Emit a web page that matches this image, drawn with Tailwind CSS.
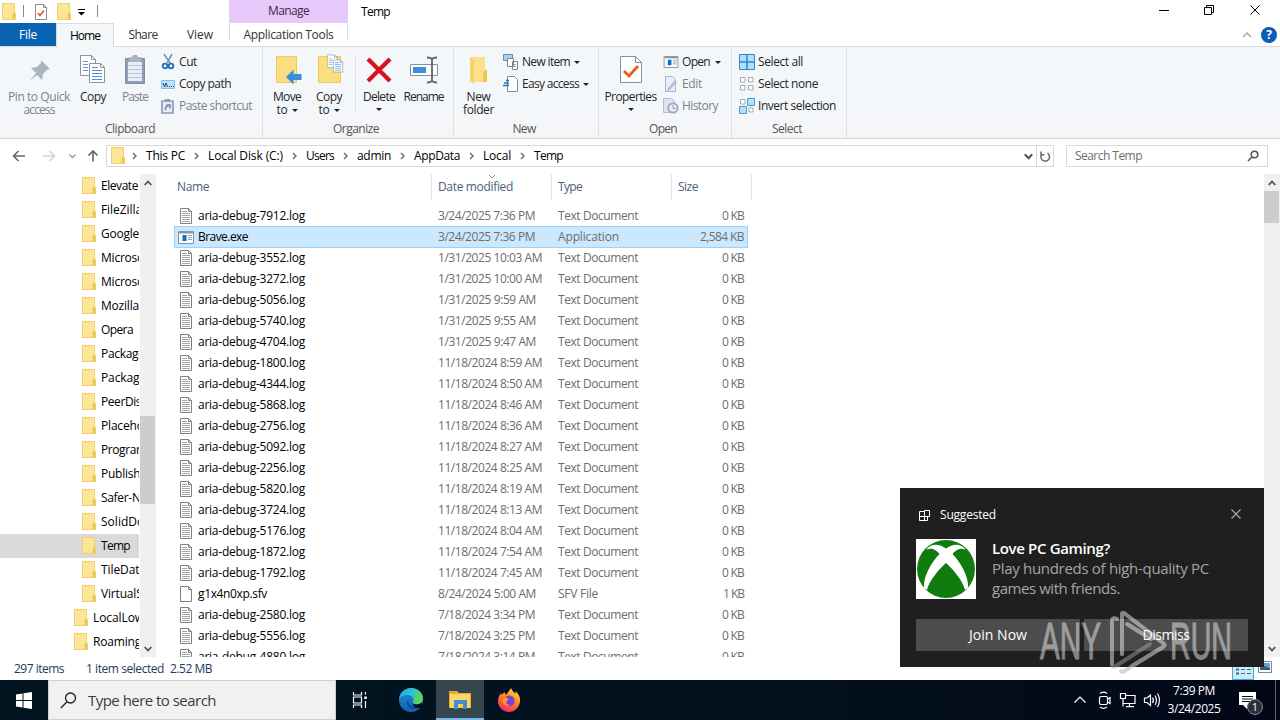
<!DOCTYPE html>
<html lang="en">
<head>
<meta charset="utf-8">
<title>Temp</title>
<script src="https://cdn.jsdelivr.net/npm/@tailwindcss/browser@4"></script>
</head>
<body class="w-[1280px] h-[720px] overflow-hidden bg-white font-['Open_Sans',sans-serif] text-[12px] leading-[12px] text-black whitespace-nowrap">
<svg class="hidden">
  <symbol id="folder" viewBox="0 0 14 17"><path d="M.5.5h12v9l1 .8v6.2H.5z" fill="#fce596" stroke="#efcf6c"/><path d="M10.500 16v-5l2.500-1.500v7z" fill="#f0c94f"/></symbol>
  <symbol id="doc" viewBox="0 0 12 16"><path d="M.5.5h8l3 3v12H.5z" fill="#fff" stroke="#808080"/><path d="M8.500.5v3h3" fill="none" stroke="#808080"/><path d="M2 3.500h5M2 5.500h8M2 7.500h8M2 9.500h8M2 11.500h8M2 13.500h8" stroke="#a5a5a5"/></symbol>
  <symbol id="blank" viewBox="0 0 12 16"><path d="M.5.5h8l3 3v12H.5z" fill="#fff" stroke="#808080"/><path d="M8.500.5v3h3" fill="none" stroke="#808080"/></symbol>
  <symbol id="app" viewBox="0 0 16 13"><path d="M.5.5h15v12H.5z" fill="#fff" stroke="#84909c"/><path d="M1 1.500h14" stroke="#8a959f" stroke-width="2"/><path d="M4.500 4h4v6h-4z" fill="#0a72c8"/><path d="M10 4.500h4M10 6.500h4M10 8.500h4" stroke="#8fa5b8"/></symbol>
  <symbol id="pages" viewBox="0 0 26 30"><path d="M.5 1.500h11l4 4v16H.5z" fill="#fff" stroke="#8b95a0"/><path d="M11.500 1.500v4h4" fill="none" stroke="#8b95a0"/><path d="M3 7.500h5M3 10.500h5M3 13.500h5M3 16.500h5" stroke="#5b9bd8"/><path d="M9.500 9.500h11l4 4v15h-15z" fill="#fff" stroke="#8b95a0"/><path d="M20.500 9.500v4h4" fill="none" stroke="#8b95a0"/><path d="M12 13.500h6M12 16.500h10M12 19.500h10M12 22.500h10M12 25.500h10" stroke="#4a90d9"/></symbol>
  <symbol id="up" viewBox="0 0 8 6"><path d="M.7 5L4 1.500 7.300 5" fill="none" stroke="#505050" stroke-width="1.800"/></symbol>
  <symbol id="down" viewBox="0 0 8 6"><path d="M.7 1L4 4.500 7.300 1" fill="none" stroke="#505050" stroke-width="1.800"/></symbol>
  <symbol id="caret" viewBox="0 0 6 3"><path d="M0 0h6L3 3z" fill="#222"/></symbol>
  <symbol id="chev" viewBox="0 0 5 8"><path d="M1 1l3 3-3 3" fill="none" stroke="#666" stroke-width="1.400"/></symbol>
</svg>

<!-- title bar -->
<div class="flex h-[23px] pl-[2px]">
  <div class="flex w-[227px] gap-0 items-center">
    <svg class="w-[14px] h-[17px] -mt-px"><use href="#folder"/></svg>
    <div class="w-px h-[12px] bg-[#8a8a8a] ml-[7px] -mt-[2px]"></div>
    <svg class="w-[12px] h-[16px] ml-[11px]" viewBox="0 0 12 16"><path d="M.5.5h8l3 3v12H.5z" fill="#fff" stroke="#8b8b8b"/><path d="M8.500.5v3h3" fill="none" stroke="#8b8b8b"/><path d="M3 9l2 2.500L9 6.500" fill="none" stroke="#e2572b" stroke-width="1.600"/></svg>
    <svg class="w-[14px] h-[17px] ml-[10px]"><use href="#folder"/></svg>
    <svg class="w-[7px] h-[7px] ml-[7px] mt-[2px]" viewBox="0 0 7 7"><path d="M0 .5h7" stroke="#000"/><path d="M0 3h7L3.500 6.500z"/></svg>
    <div class="w-px h-[12px] bg-[#8a8a8a] ml-[12px] -mt-[2px]"></div>
  </div>
  <div class="flex w-[119px] bg-[#e8c9fc] items-center justify-center pb-[2px] text-[#3c2b49]"><span data-w="41">Manage</span></div>
  <div class="flex flex-1 items-center pl-[13px]"><span data-w="29">Temp</span></div>
  <svg class="w-[140px] h-[23px] mt-px" viewBox="0 0 140 23" fill="none" stroke="#000"><path d="M19 9.500h10"/><path d="M64.500 6.500h7v7h-7zM66.500 6V4.500h7v7H72"/><path d="M110.500 4.500l9 9M119.500 4.500l-9 9"/></svg>
</div>
<!-- ribbon tabs -->
<div class="flex h-[24px] border-b border-[#dadbdc]">
  <div class="flex w-[56px] h-[23px] bg-[#0a63b1] text-white items-center justify-center"><span data-w="18">File</span></div>
  <div class="flex w-[58px] h-[24px] bg-[#f4f7fa] border-x border-t border-[#dadbdc] items-center justify-center"><span data-w="30">Home</span></div>
  <div class="flex w-[58px] items-center justify-center text-[#333]"><span data-w="29">Share</span></div>
  <div class="flex w-[57px] items-center justify-center text-[#333] pr-px"><span data-w="26">View</span></div>
  <div class="flex w-[119px] h-[17px] pt-[6px] border-x border-[#dadbdc] justify-center text-[#333]"><span data-w="90">Application Tools</span></div>
  <div class="flex flex-1 justify-end items-center gap-[9px] pr-[3px]">
    <svg class="w-[10px] h-[6px]" viewBox="0 0 10 6"><path d="M1 5l4-4 4 4" fill="none" stroke="#a4a4a4" stroke-width="1.300"/></svg>
    <div class="flex w-[16px] h-[16px] rounded-full bg-[#0a5fb4] text-white font-bold items-center justify-center">?</div>
  </div>
</div>
<!-- ribbon -->
<div class="flex h-[92px] bg-linear-to-b from-[#f4f7fa] from-70% to-[#f5f5f6] border-b border-[#d6d7d8] text-[#262626]">
  <section class="flex flex-col w-[263px] border-r border-[#e0e1e3]">
    <div class="flex h-[75px] pt-[4px]">
      <div class="flex flex-col items-center w-[78px] pt-[3px] text-[#808285]">
        <svg class="w-[32px] h-[32px] mb-[5px]" viewBox="0 0 32 32"><path d="M18 6l9 9-3 1-4 4-1 6-5-5-7 6 6-8-5-5 6-1 4-4z" fill="#a9b4c2"/></svg>
        <span data-w="62">Pin to Quick</span><span data-w="31" class="mt-px">access</span></div>
      <div class="flex flex-col items-center w-[30px] pt-[3px]">
        <svg class="w-[26px] h-[30px] mb-[7px]"><use href="#pages"/></svg><span data-w="26">Copy</span></div>
      <div class="flex flex-col items-center w-[53px] pt-[3px] pl-px text-[#808285]">
        <svg class="w-[22px] h-[32px] mb-[5px]" viewBox="0 0 22 32"><path d="M1.500 4.500h19v25h-19z" fill="#8f9fba" stroke="#7f8dab"/><path d="M4 8h14v19H4z" fill="#e8edf6"/><path d="M5 3h3l1-2h4l1 2h3v5H5z" fill="#aab3c4"/><path d="M4 11.500h14M4 15.500h14M4 19.500h14M4 23.500h14" stroke="#bcc7dc"/></svg><span data-w="26">Paste</span></div>
      <div class="flex flex-col">
        <div class="flex h-[22px] items-center"><svg class="w-[18px] h-[16px]" viewBox="0 0 18 16"><path d="M3 0l6 9M11 0L6 9" stroke="#7b95ab" stroke-width="1.600"/><g fill="none" stroke="#1a6fb5" stroke-width="1.800"><circle cx="4" cy="12" r="2.300"/><circle cx="10" cy="12" r="2.300"/></g></svg><span data-w="18">Cut</span></div>
        <div class="flex h-[22px] items-center"><svg class="w-[18px] h-[9px]" viewBox="0 0 18 9"><path d="M.5.5h13v8H.5z" fill="#bfe0f8" stroke="#8abfe6"/><path d="M2 3l1.500 4L5 3l1.500 4M8 6.500h1M10 6.500h1M12 6.500h1" fill="none" stroke="#174d7d"/></svg><span data-w="52">Copy path</span></div>
        <div class="flex h-[22px] items-center text-[#808285]"><svg class="w-[18px] h-[15px]" viewBox="0 0 18 15"><path d="M1 2h11v12H1z" fill="#e6ebf4" stroke="#8c9ab5" stroke-width="1.600"/><path d="M4 0h5v3H4z" fill="#8c9ab5"/><path d="M4.500 11C4 8 6 6.500 8 6.500M5.500 6H9v3.500" fill="none" stroke="#7387ab" stroke-width="1.500"/></svg><span data-w="73">Paste shortcut</span></div>
      </div>
    </div>
    <div class="flex justify-center text-[#555] pr-[2px] pt-px"><span data-w="50">Clipboard</span></div>
  </section>
  <section class="flex flex-col w-[191px] border-r border-[#e0e1e3]">
    <div class="flex h-[75px] pt-[4px]">
      <div class="flex flex-col items-center w-[48px] pt-[3px]">
        <svg class="w-[28px] h-[32px] mb-[5px] ml-[2px]" viewBox="0 0 28 32"><path d="M2.500 2.500h20v26h-20z" fill="#fbdf7e" stroke="#eecb63"/><path d="M27.500 20h-8v-4.500L12 23l7.500 7.500V26h8z" fill="#3b8cdb"/></svg><span data-w="28">Move</span>
        <div class="flex items-center gap-[4px] mt-px"><span data-w="11">to</span><svg class="w-[6px] h-[3px]"><use href="#caret"/></svg></div></div>
      <div class="flex flex-col items-center w-[36px] pt-[3px]">
        <svg class="w-[30px] h-[32px] mb-[5px]" viewBox="0 0 30 32"><path d="M4.500 2.500h22v26h-22z" fill="#fbdf7e" stroke="#eecb63"/><svg x="13" y="0" width="17" height="19" viewBox="0 0 26 30"><use href="#pages"/></svg></svg><span data-w="26">Copy</span>
        <div class="flex items-center gap-[4px] mt-px"><span data-w="11">to</span><svg class="w-[6px] h-[3px]"><use href="#caret"/></svg></div></div>
      <div class="w-px h-[58px] bg-[#e0e1e3] ml-[8px] mt-[4px]"></div>
      <div class="flex flex-col items-center w-[46px] pt-[3px]">
        <svg class="w-[26px] h-[32px] mb-[5px]" viewBox="0 0 26 32"><path d="M2 5l22 22M24 5L2 27" stroke="#d9101e" stroke-width="4.200"/></svg><span data-w="32">Delete</span><svg class="w-[6px] h-[3px] mt-[5px]"><use href="#caret"/></svg></div>
      <div class="flex flex-col items-center w-[43px] pt-[3px]">
        <svg class="w-[28px] h-[32px] mb-[5px]" viewBox="0 0 28 32"><path d="M.5 10.500h27v11H.5z" fill="#fff" stroke="#8a8f96"/><path d="M3 13h13v6H3z" fill="#3b8ee0"/><path d="M17 3.500c3 0 4.500.5 5 2 .5-1.500 2-2 5-2M17 28.500c3 0 4.500-.5 5-2 .5 1.500 2 2 5 2M22 5v22" fill="none" stroke="#60656b" stroke-width="1.800"/></svg><span data-w="40">Rename</span></div>
    </div>
    <div class="flex justify-center text-[#555] pr-[4px] pt-px"><span data-w="46">Organize</span></div>
  </section>
  <section class="flex flex-col w-[145px] border-r border-[#e0e1e3]">
    <div class="flex h-[75px] pt-[4px]">
      <div class="flex flex-col items-center w-[49px] pt-[3px]">
        <svg class="w-[20px] h-[32px] mb-[5px]" viewBox="0 0 20 32"><path d="M1 3h15v13l2 2v10H1z" fill="#fce18a"/><path d="M1 3l4 3v24l-4-3z" fill="#f7d36c"/><path d="M14 28V18l4-3v13z" fill="#efc44f"/></svg><span data-w="24">New</span><span data-w="31" class="mt-px">folder</span></div>
      <div class="flex flex-col">
        <div class="flex h-[22px] items-center"><svg class="w-[16px] h-[16px] mr-[3px]" viewBox="0 0 16 16"><path d="M.5.5h9v6h-9z" fill="#a7d2f3" stroke="#5f8fb6"/><path d="M4.500 4.500h6v8h-6zM9.500 7.500h5v8h-5z" fill="#fff" stroke="#7c858e"/><path d="M11 10.500h2M11 12.500h2" stroke="#9ab"/></svg><span data-w="48">New item</span><svg class="w-[6px] h-[3px] ml-[4px]"><use href="#caret"/></svg></div>
        <div class="flex h-[22px] items-center"><svg class="w-[16px] h-[16px] mr-[3px]" viewBox="0 0 16 16"><path d="M4.500.5h7l3 3v12h-10z" fill="#fff" stroke="#858b92"/><path d="M0 9.500h6M1 7h5M3 4.500h3" stroke="#2176bd" stroke-width="1.400"/></svg><span data-w="57">Easy access</span><svg class="w-[6px] h-[3px] ml-[4px]"><use href="#caret"/></svg></div>
      </div>
    </div>
    <div class="flex justify-center text-[#555] pr-[4px] pt-px"><span data-w="23">New</span></div>
  </section>
  <section class="flex flex-col w-[133px] border-r border-[#e0e1e3]">
    <div class="flex h-[75px] pt-[4px]">
      <div class="flex flex-col items-center w-[64px] pt-[3px] pr-px">
        <svg class="w-[22px] h-[32px] mb-[5px]" viewBox="0 0 22 32"><path d="M.5 2.500h15l6 6v20H.5z" fill="#fff" stroke="#8a8f96"/><path d="M15.500 2.500v6h6" fill="none" stroke="#8a8f96"/><path d="M4 17l5 5 9-10" fill="none" stroke="#e8601c" stroke-width="2.800"/></svg><span data-w="52">Properties</span><svg class="w-[6px] h-[3px] mt-[5px]"><use href="#caret"/></svg></div>
      <div class="flex flex-col">
        <div class="flex h-[22px] items-center"><svg class="w-[16px] h-[12px] mr-[3px]"><use href="#app"/></svg><span data-w="28">Open</span><svg class="w-[6px] h-[3px] ml-[5px]"><use href="#caret"/></svg></div>
        <div class="flex h-[22px] items-center text-[#808285]"><svg class="w-[16px] h-[16px] mr-[3px]" viewBox="0 0 16 16"><path d="M2.500.5h7l3 3v12h-10z" fill="#e9edf5" stroke="#a9b4cb"/><path d="M5 12l7-8 2 2-7 8-3 1z" fill="#b3bfd6"/></svg><span data-w="20">Edit</span></div>
        <div class="flex h-[22px] items-center text-[#808285]"><svg class="w-[16px] h-[16px] mr-[3px]" viewBox="0 0 16 16"><path d="M.5.5h8l3 3v11H.5z" fill="#dfe4ee" stroke="#b4bdd0"/><circle cx="10" cy="10" r="4.700" fill="#e9edf5" stroke="#9ba9c4" stroke-width="1.800"/><path d="M10 7v3.500h3" fill="none" stroke="#8c9ab5"/></svg><span data-w="36">History</span></div>
      </div>
    </div>
    <div class="flex justify-center text-[#555] pr-[4px] pt-px"><span data-w="28">Open</span></div>
  </section>
  <section class="flex flex-col w-[115px] border-r border-[#e0e1e3]">
    <div class="flex h-[75px] pt-[4px] pl-[7px]">
      <div class="flex flex-col">
        <div class="flex h-[22px] items-center"><svg class="w-[16px] h-[16px] mr-[3px]" viewBox="0 0 16 16"><path d="M.5.5h15v15H.5z" fill="#b5def9" stroke="#2f87cf"/><path d="M8 0v16M0 8h16" stroke="#2f87cf" stroke-width="1.500"/></svg><span data-w="45">Select all</span></div>
        <div class="flex h-[22px] items-center"><svg class="w-[16px] h-[16px] mr-[3px]" viewBox="0 0 16 16"><path d="M1.500 1.500h4.500v4.500H1.500zM9.500 1.500H14v4.500H9.500zM1.500 9.500h4.500V14H1.500zM9.500 9.500H14V14H9.500z" fill="#fff" stroke="#a8a8a8"/></svg><span data-w="60">Select none</span></div>
        <div class="flex h-[22px] items-center"><svg class="w-[16px] h-[16px] mr-[3px]" viewBox="0 0 16 16"><path d="M1.500 1.500h4.500v4.500H1.500zM10 10h4v4h-4z" fill="#fff" stroke="#a8a8a8"/><path d="M8.500.5h7v7h-7zM.5 8.500h7v7h-7z" fill="#b5def9" stroke="#3f9ae0"/></svg><span data-w="78">Invert selection</span></div>
      </div>
    </div>
    <div class="flex justify-center text-[#555] pr-[4px] pt-px"><span data-w="30">Select</span></div>
  </section>
</div>
<!-- address bar -->
<div class="flex h-[35px] pt-[6px]">
  <svg class="w-[106px] h-[22px]" viewBox="0 0 106 22" fill="none" stroke="#666" stroke-width="1.600"><path d="M25 11H14M18.500 6L13.500 11l5 5"/><path d="M43 11h11M49.500 6l5 5-5 5" stroke="#d4d4d4"/><path d="M69.500 9.500l3 3 3-3" stroke="#999" stroke-width="1.300"/><path d="M93 16.500V6M88.500 10.500L93 6l4.500 4.500"/></svg>
  <div class="flex w-[948px] h-[22px] border border-[#d9d9d9] items-center">
    <svg class="w-[14px] h-[17px] ml-[4px] mr-[-1px] -mt-px"><use href="#folder"/></svg>
    <div id="crumbs" class="flex flex-1 items-center"></div>
    <svg class="w-[9px] h-[7px] mr-[3px]" viewBox="0 0 8 6"><use href="#down"/></svg>
    <div class="flex w-[17px] h-[20px] border-l border-[#d9d9d9] items-center justify-center"><svg class="w-[12px] h-[13px]" viewBox="0 0 12 13"><path d="M8.500 3.200A4.300 4.300 0 1 1 3 4M2 1.500v3.200h3.300" fill="none" stroke="#666" stroke-width="1.500"/></svg></div>
  </div>
  <div class="flex w-[202px] h-[22px] ml-[12px] border border-[#d9d9d9] items-center justify-between pl-[8px] pr-[8px] text-[#6d6d6d]"><span data-w="67">Search Temp</span><svg class="w-[12px] h-[12px]" viewBox="0 0 12 12" fill="none" stroke="#555" stroke-width="1.600"><circle cx="7.500" cy="4.500" r="3.300"/><path d="M5 7L1 11"/></svg></div>
</div>
<!-- explorer body -->
<div class="flex h-[483px] overflow-hidden">
  <div id="tree" class="w-[139px] h-[483px] overflow-hidden"></div>
  <div class="flex flex-col w-[16px] ml-px bg-[#f0f0f0] items-center pt-[6px]">
    <svg class="w-[8px] h-[6px] shrink-0"><use href="#up"/></svg>
    <div class="w-[15px] h-[88px] bg-[#cdcdcd] mt-[230px] self-start shrink-0"></div>
    <svg class="w-[8px] h-[6px] shrink-0 mt-[142px]"><use href="#down"/></svg>
  </div>
  <div class="flex flex-col flex-1 pl-[18px]">
    <div class="flex h-[31px] shrink-0 text-[#4c607a]">
      <div class="flex w-[258px] h-[26px] border-r border-[#e5e5e5] items-center pl-[3px]"><span data-w="32">Name</span></div>
      <div class="relative flex w-[120px] h-[26px] border-r border-[#e5e5e5] items-center pl-[6px]"><span data-w="75">Date modified</span><svg class="absolute left-[56px] top-0 w-[8px] h-[5px]" viewBox="0 0 8 5"><path d="M1 1l3 3 3-3" fill="none" stroke="#888"/></svg></div>
      <div class="flex w-[120px] h-[26px] border-r border-[#e5e5e5] items-center pl-[6px]"><span data-w="24">Type</span></div>
      <div class="flex w-[80px] h-[26px] border-r border-[#e5e5e5] items-center pl-[6px]"><span data-w="20">Size</span></div>
    </div>
    <div id="files"></div>
  </div>
  <div class="flex flex-col w-[16px] bg-[#f0f0f0] items-center pt-[6px]">
    <svg class="w-[8px] h-[6px] shrink-0"><use href="#up"/></svg>
    <div class="w-[15px] h-[32px] bg-[#cdcdcd] mt-[5px] self-start shrink-0"></div>
    <svg class="w-[8px] h-[6px] shrink-0 mt-[423px]"><use href="#down"/></svg>
  </div>
</div>
<!-- status bar -->
<div class="flex h-[23px] items-center pl-[14px] text-[#1e395b]">
  <span data-w="50">297 items</span><span data-w="78" class="ml-[22px]">1 item selected</span><span data-w="42" class="ml-[6px]">2.52 MB</span>
  <div class="flex flex-1 justify-end pr-[8px] items-center gap-[4px]">
    <svg class="w-[22px] h-[22px]" viewBox="0 0 22 22"><path d="M.5.5h21v21H.5z" fill="#c9ebfb" stroke="#3fa9dc"/><path d="M4 11.500h3M4 15.500h3" stroke="#567" stroke-width="2"/><path d="M9 11.500h4M15 11.500h4M9 15.500h4M15 15.500h4" stroke="#567"/></svg>
    <svg class="w-[14px] h-[12px] -mt-[3px]" viewBox="0 0 14 12"><path d="M.5.5h13v11H.5z" fill="#fff" stroke="#7b8794"/><path d="M2 2h10v5H2z" fill="#5ba7dc"/><path d="M2 7l4-2 6 2v2H2z" fill="#345a77"/></svg>
  </div>
</div>
<!-- taskbar -->
<div class="flex h-[40px] bg-linear-to-r from-[#02141f] via-[#02131f] to-[#030718] text-white">
  <div class="flex w-[48px] items-center justify-center"><svg class="w-[16px] h-[17px]" viewBox="0 0 16 17" fill="#fff"><path d="M0 2.500l6.500-1V8H0zM7.500 1.300L16 0v8H7.500zM0 9h6.500v6.500L0 14.500zM7.500 9H16v8l-8.500-1.300z"/></svg></div>
  <div class="flex w-[288px] bg-[#f1f1f1] border border-[#cfcfcf] items-center pl-[11px] text-[#3c3c3c] text-[15px]">
    <svg class="w-[17px] h-[17px] mr-[11px]" viewBox="0 0 17 17" fill="none" stroke="#222" stroke-width="1.300"><circle cx="10.500" cy="6" r="5"/><path d="M7 9.800L.8 16"/></svg>
    <span data-w="128">Type here to search</span></div>
  <div class="flex w-[48px] items-center justify-center"><svg class="w-[16px] h-[16px]" viewBox="0 0 16 16" fill="none" stroke="#fff" stroke-width="1.200"><path d="M1.500 0v3h8V0M1.500 16v-3h8v3M1.500 5h8v6h-8zM13.500 0v2.500M13.500 9v7"/><path d="M12.300 4.500h2.500v2.500h-2.500z" fill="#fff" stroke="none"/></svg></div>
  <div class="flex w-[52px] items-center justify-center pl-[2px]"><svg class="w-[24px] h-[24px]" viewBox="0 0 24 24"><defs><linearGradient id="eg" x1="0" y1="0" x2="1" y2=".3"><stop offset="0" stop-color="#1fa3e6"/><stop offset=".6" stop-color="#2fc3cf"/><stop offset="1" stop-color="#5cd653"/></linearGradient><linearGradient id="eb" x1="0" y1="0" x2="0" y2="1"><stop offset="0" stop-color="#2390dd"/><stop offset="1" stop-color="#1160b4"/></linearGradient></defs><circle cx="12" cy="12" r="12" fill="url(#eb)"/><path d="M0 11.500C.5 5 5.500 0 12 0s12 4.600 12 10c0 4-3 6.500-6.500 6.500-2.500 0-4-.8-4-1.800 0-.7 1-1 1-2.700C14.500 9 12 7 8.500 7 4.500 7 1 9 0 11.500z" fill="url(#eg)"/><path d="M9.500 11c-1 1.200-1.500 2.500-1.500 4 0 3.500 3.500 6.500 8 6 2.200-.2 4.500-1.300 6-3-1 .7-3 1-5 1-4.500 0-8.500-3-7.500-8z" fill="#0d4a94"/><path d="M13.800 14.500c0 1.200 1.700 2 3.700 2 1.800 0 3.500-.6 4.700-1.700l2.300 1.700-2.500 3.500c-2 .2-4.500.2-6-1-2-1.300-2.700-3-2.200-4.500z" fill="#02131f"/></svg></div>
  <div class="flex w-[48px] bg-[#35464f] border-b-2 border-[#76b9ed] items-center justify-center"><svg class="w-[22px] h-[19px]" viewBox="0 0 22 19"><path d="M0 1h8l2 2h12v15H0z" fill="#f0a92c"/><path d="M1 4h20v14H1z" fill="#fcd667"/><path d="M5 19v-9h13v9h-4v-5H9v5z" fill="#3f8fd3"/><path d="M9 14h5v4H9z" fill="#fbc94c"/></svg></div>
  <div class="flex w-[50px] items-center justify-center"><svg class="w-[24px] h-[24px]" viewBox="0 0 24 24"><defs><linearGradient id="ff" x1=".8" y1="0" x2=".3" y2="1"><stop offset="0" stop-color="#ffe23b"/><stop offset=".45" stop-color="#ff8a1e"/><stop offset="1" stop-color="#f5236b"/></linearGradient></defs><path d="M14 0c1 3 3 4 4 5.500.6-.6.500-1.500.3-2.200C21.500 5.500 23.500 9 23 13.500 22.300 19.500 17.500 24 12 24S1 19.500 1 13.500c0-3.500 1-6 3-8.500l.6 2C6 5 7 4.500 8 4.500l.5 2.300C10 6.500 12 3 14 0z" fill="url(#ff)"/><circle cx="12.500" cy="12.800" r="5.200" fill="#7542e0"/><path d="M6 11c2-1.800 4-1.500 6 .4-1 .8-2.500 1-2.700 2.600 0 1.800 1.500 3 3.500 2.500-3 3-8 0-6.800-5.500z" fill="#ff9a1f"/></svg></div>
  <div class="flex flex-1 justify-end items-center">
    <svg class="w-[92px] h-[22px] mr-[5px]" viewBox="0 0 92 22" fill="none" stroke="#fff" stroke-width="1.200"><path d="M5.500 13.500L11 8l5.500 5.500"/><rect x="30.500" y="7.500" width="8" height="8" rx="1.500"/><path d="M38.500 10l2.500-1.500v6L38.500 13M31 4.500c2-1.500 5-1.500 7 0M31 18c2 1.500 5 1.500 7 0"/><path d="M57 6.500h9v8H54M60.500 14.500v3M57 17.700h8"/><path d="M51.500 4.500h5v5h-5zM54 9.500v8"/><path d="M75.500 9h2.500l3.500-3v10.500L78 13.500h-2.500zM83.500 8.500c1 1.500 1 4 0 5.500M86 6.500c1.800 2.500 1.800 7 0 9.500M88.500 4.500c2.500 3.800 2.500 9.700 0 13.500"/></svg>
    <div class="flex flex-col items-center gap-[6px] w-[56px] pb-[1px]"><span data-w="42">7:39 PM</span><span data-w="53">3/24/2025</span></div>
    <div class="relative flex w-[54px] h-[40px] border-r border-[#5c6270] mr-[4px] pl-[17px] pt-[12px]">
      <svg class="w-[17px] h-[17px]" viewBox="0 0 17 17"><path d="M0 0h17v13H8v4l-4-4H0z" fill="#fff"/><path d="M3 4.500h11M3 7h11M3 9.500h8" stroke="#06101d"/></svg>
      <div class="absolute left-[25px] top-[19px] flex w-[16px] h-[16px] rounded-full bg-[#2a2f38] border border-[#858a92] items-center justify-center text-[11px]">1</div>
    </div>
  </div>
</div>

<!-- notification toast -->
<div class="absolute left-[900px] top-[488px] w-[364px] h-[179px] bg-[#1f1f1f] text-white px-[16px] flex flex-col">
  <div class="flex items-center h-[51px] pl-[3px] pr-[7px]">
    <svg class="w-[11px] h-[11px] mt-[3px]" viewBox="0 0 11 11" fill="none" stroke="#fff"><path d="M.5 1.500h5v9h-5zM.5 6.500h8v4h-8M5.500.5h5v6h-5z"/></svg>
    <span data-w="56" class="ml-[10px] mt-[3px]">Suggested</span>
    <svg class="w-[10px] h-[10px] ml-auto" viewBox="0 0 10 10"><path d="M.5.5l9 9M9.500.5l-9 9" stroke="#a5a5a5" stroke-width="1.200"/></svg>
  </div>
  <div class="flex h-[80px]">
    <svg class="w-[60px] h-[60px]" viewBox="0 0 60 60"><path d="M0 0h60v60H0z" fill="#fff"/><circle cx="30" cy="30" r="29" fill="#107c10"/><path d="M13 8C18 4 25 6 30 9.500 35 6 42 4 47 8c3 2 3 3 0 2-4-1-8 2-10.500 5C45 24 53 38 52 49l-3 2C47 42 37 30 30 24 23 30 13 42 11 51l-3-2C7 38 15 24 23.500 15 21 12 17 9 13 10c-3 1-3 0 0-2z" fill="#fff"/></svg>
    <div class="flex flex-col items-start ml-[16px] -mt-px text-[15px] leading-[20px] text-[#a5a5a5]">
      <span data-w="118" class="font-semibold text-white">Love PC Gaming?</span><span data-w="217">Play hundreds of high-quality PC</span><span data-w="128">games with friends.</span></div>
  </div>
  <div class="flex gap-[4px] text-[14px]">
    <div class="flex flex-1 h-[32px] bg-[#4c4c4c] items-center justify-center"><span data-w="58">Join Now</span></div>
    <div class="flex flex-1 h-[32px] bg-[#4c4c4c] items-center justify-center"><span data-w="47">Dismiss</span></div>
  </div>
</div>
<!-- watermark -->
<svg class="absolute left-[1036px] top-[606px] w-[200px] h-[70px] opacity-45" viewBox="0 0 200 70" fill="#fff" stroke="#fff" font-family="Liberation Sans">
  <text x="4" y="53" font-size="52" stroke-width="1" textLength="61" lengthAdjust="spacingAndGlyphs">ANY</text>
  <text x="134" y="53" font-size="52" stroke-width="1" textLength="62" lengthAdjust="spacingAndGlyphs">RUN</text>
  <g fill="none" stroke="#aaa" stroke-width="4" stroke-linejoin="round" stroke-linecap="round"><path d="M86 48V8q0-2 2-1l39 30q3 2 0 4L90 64q-4 3-5 1"/><path d="M91 18l24 15"/><path d="M81 13q-5-2-5 2v43q0 4 4 2l34-22"/></g>
  <g fill="none" stroke="#fff" stroke-width="4" stroke-linejoin="round" stroke-linecap="round"><path d="M86 48V8q0-2 2-1l39 30q3 2 0 4L96 60"/><path d="M91 18l24 15"/><path d="M81 13q-5-2-5 2v43"/></g>
</svg>

<script>
const span = (t, w, c = '') => `<span data-w="${w}" class="${c}">${t}</span>`;
const chev = '<svg class="w-[5px] h-[8px] shrink-0"><use href="#chev"/></svg>';
document.getElementById('crumbs').innerHTML = [['This PC',39],['Local Disk (C:)',75],['Users',28],['admin',34],['AppData',46],['Local',28],['Temp',29]]
  .map(([t, w]) => `<div class="flex items-center mr-px pl-[8px] gap-[9px]">${chev}${span(t, w)}</div>`).join('');
document.getElementById('tree').innerHTML = [['Elevate',37],['FileZilla',41],['Google',38],['Microsoft',51],['Microsoft',51],['Mozilla',38],['Opera',32],['Packages',49],['Package',45],['PeerDist',44],['Placeholder',64],['Programs',51],['Publishers',56],['Safer-Net',50],['SolidDoc',49],['Temp',29],['TileData',45],['VirtualStore',64],['LocalLow',51],['Roaming',48]]
  .map(([t, w], i) => `<div class="${i > 17 ? 'flex items-center h-[24px] pl-[74px] gap-[5px]' : i === 15 ? 'flex items-center h-[24px] pl-[82px] gap-[5px] bg-[#d9d9d9]' : 'flex items-center h-[24px] pl-[82px] gap-[5px]'}"><svg class="w-[14px] h-[17px] shrink-0 -mt-px"><use href="#folder"/></svg>${span(t, w)}</div>`).join('');
const log = (n, d, w) => [`aria-debug-${n}.log`, 107, d, w, 'Text Document', 80, '0 KB', 22, 'doc'];
const rows = [log(7912,'3/24/2025 7:36 PM',97), ['Brave.exe',50,'3/24/2025 7:36 PM',97,'Application',61,'2,584 KB',44,'app'],
  log(3552,'1/31/2025 10:03 AM',104), log(3272,'1/31/2025 10:00 AM',104), log(5056,'1/31/2025 9:59 AM',98), log(5740,'1/31/2025 9:55 AM',98), log(4704,'1/31/2025 9:47 AM',98),
  log(1800,'11/18/2024 8:59 AM',104), log(4344,'11/18/2024 8:50 AM',104), log(5868,'11/18/2024 8:46 AM',104), log(2756,'11/18/2024 8:36 AM',104), log(5092,'11/18/2024 8:27 AM',104), log(2256,'11/18/2024 8:25 AM',104), log(5820,'11/18/2024 8:19 AM',104), log(3724,'11/18/2024 8:13 AM',104), log(5176,'11/18/2024 8:04 AM',104), log(1872,'11/18/2024 7:54 AM',104), log(1792,'11/18/2024 7:45 AM',104),
  ['g1x4n0xp.sfv',69,'8/24/2024 5:00 AM',98,'SFV File',40,'1 KB',21,'blank'], log(2580,'7/18/2024 3:34 PM',97), log(5556,'7/18/2024 3:25 PM',97), log(4880,'7/18/2024 3:14 PM',97)];
document.getElementById('files').innerHTML = rows.map(([n, nw, d, dw, t, tw, s, sw, ic]) =>
  `<div class="${ic === 'app' ? 'flex items-center w-[574px] h-[22px] -mb-px bg-[#cce8ff] outline outline-[#99d1ff] -outline-offset-1' : 'flex items-center w-[574px] h-[21px]'}">
    <div class="flex w-[24px] justify-center items-center"><svg class="${ic === 'app' ? 'w-[16px] h-[13px]' : 'w-[12px] h-[16px]'}"><use href="#${ic}"/></svg></div>
    <div class="flex w-[240px]">${span(n, nw)}</div><div class="flex w-[120px] text-[#6d6d6d]">${span(d, dw)}</div><div class="flex w-[120px] text-[#6d6d6d]">${span(t, tw)}</div><div class="flex w-[66px] justify-end text-[#6d6d6d]">${span(s, sw)}</div></div>`).join('');
const fit = e => {
  const r = document.createRange(); r.selectNodeContents(e);
  e.style.letterSpacing = '0px';
  e.style.letterSpacing = ((+e.dataset.w - r.getBoundingClientRect().width) / e.textContent.length).toFixed(3) + 'px';
};
const labels = document.querySelectorAll('[data-w]');
const fitAll = () => labels.forEach(fit);
const watcher = new ResizeObserver(list => list.forEach(x => fit(x.target)));
labels.forEach(e => watcher.observe(e));
addEventListener('load', () => { fitAll(); requestAnimationFrame(fitAll); });
document.fonts.ready.then(fitAll);
</script>
</body>
</html>
